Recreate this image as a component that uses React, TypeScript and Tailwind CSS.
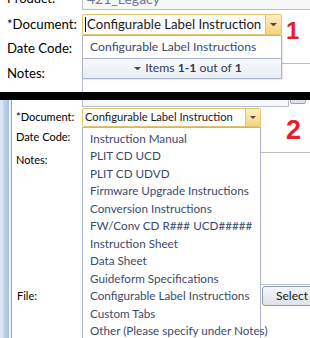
import React from "react";

const items = [
  "Instruction Manual",
  "PLIT CD UCD",
  "PLIT CD UDVD",
  "Firmware Upgrade Instructions",
  "Conversion Instructions",
  "FW/Conv CD R### UCD#####",
  "Instruction Sheet",
  "Data Sheet",
  "Guideform Specifications",
  "Configurable Label Instructions",
  "Custom Tabs",
  "Other (Please specify under Notes)",
];

function Arrow({ size = 8 }: { size?: number }) {
  return (
    <svg width={size} height={size / 2} viewBox="0 0 8 4">
      <path d="M0 0 L8 0 L4 4 Z" fill="#4a4a4a" />
    </svg>
  );
}

export default function App() {
  return (
    <div
      className="w-[310px] h-[338px] overflow-hidden bg-white relative"
      style={{ fontFamily: "Lato, 'Open Sans', sans-serif" }}
    >
      {/* Top section */}
      <div className="h-[92px] overflow-hidden relative">
        <div className="mt-[-13px] flex flex-col">
          <div className="flex h-[23px] items-center">
            <div className="w-[82px] shrink-0 pl-[7px] text-[13px] text-black">Product:</div>
            <div className="w-[230px] shrink-0 h-[23px] border border-[#b5bfcd] bg-[#f6f7f9] pl-[4px] text-[14px] text-[#6b7b93] leading-[21px]">
              421_Legacy
            </div>
          </div>
          <div className="flex h-[21px] items-center mt-[4px]">
            <div className="w-[82px] shrink-0 pl-[7px] text-[13.2px] text-black">*Document:</div>
            <div className="flex w-[200px] shrink-0 h-[21px] border border-[#e2c46f] bg-white rounded-[2px]">
              <div className="flex-1 pl-[2px] flex items-center text-[13.2px] text-[#1a1a1a] leading-none whitespace-nowrap overflow-hidden">
                <span className="w-px h-[15px] bg-black mr-[1px]" />
                Configurable Label Instruction
              </div>
              <div className="w-[16px] h-full bg-gradient-to-b from-[#fdefbf] to-[#f6d37e] border-l border-[#e2c46f] flex items-center justify-center">
                <Arrow size={7} />
              </div>
            </div>
          </div>
          <div className="flex h-[23px] items-center mt-[2px]">
            <div className="w-[82px] shrink-0 pl-[7px] text-[13.2px] text-black">Date Code:</div>
            <div className="w-[180px] shrink-0 h-[23px] border border-[#b5bfcd]" />
          </div>
          <div className="flex mt-[3px]">
            <div className="w-[82px] shrink-0 pl-[7px] pt-[1px] text-[13.2px] text-black">Notes:</div>
            <div className="flex-1 h-[60px] border border-[#b5bfcd] border-r-0" />
          </div>
        </div>

        {/* dropdown 1 */}
        <div className="absolute left-[82px] top-[35px] w-[200px] h-[44px] border border-[#a8b5ca] bg-white flex flex-col shadow-[1px_1px_1px_rgba(0,0,0,0.08)]">
          <div className="h-[22px] pl-[7px] flex items-center text-[12.2px] text-[#3a4b6e] whitespace-nowrap">
            Configurable Label Instructions
          </div>
          <div className="flex-1 border-t border-[#a8b5ca] bg-gradient-to-b from-[#f7f9fb] to-[#e9edf3] flex items-center justify-center gap-[4px] pl-[12px] text-[12.2px] text-[#2f3b52]">
            <Arrow size={7} />
            <span>
              Items <b>1-1</b> out of <b>1</b>
            </span>
          </div>
        </div>

        <div
          className="absolute left-[286px] top-[13px] text-[24px] font-bold text-[#e4202c]"
          style={{ fontFamily: "'Liberation Sans', Arial, sans-serif" }}
        >
          1
        </div>
      </div>

      {/* black bar */}
      <div className="h-[8px] bg-black" />

      {/* Bottom section */}
      <div className="relative flex h-[238px]">
        {/* window frame */}
        <div className="w-[3px] bg-[#dce7f5]" />
        <div className="w-[6px] bg-gradient-to-r from-[#c4d6ec] to-[#aac2e0]" />
        <div className="w-[2px] bg-[#eef3fa]" />
        <div className="w-px bg-[#9aa6b5]" />
        <div className="flex-1 overflow-hidden">
          <div className="flex flex-col mt-[-8px]">
            <div className="flex h-[15px]">
              <div className="w-[70px] shrink-0" />
              <div className="w-[207px] shrink-0 h-[15px] border border-[#b5bfcd] bg-[#f6f7f9]" />
              <div className="ml-[1px] w-[16px] shrink-0 h-[12px] border border-[#9aa3ae] bg-[#dfe3e8] rounded-[2px]" />
            </div>
            <div className="flex h-[19px] items-center mt-[1px]">
              <div className="w-[70px] shrink-0 pl-[4px] text-[11px] text-black">*Document:</div>
              <div className="flex w-[179px] shrink-0 h-[19px] border border-[#e2c46f] bg-white rounded-[2px]">
                <div className="flex-1 pl-[2px] flex items-center text-[11.2px] text-[#1a1a1a] whitespace-nowrap overflow-hidden">
                  Configurable Label Instruction
                </div>
                <div className="w-[15px] h-full bg-gradient-to-b from-[#fdefbf] to-[#f6d37e] border-l border-[#e2c46f] flex items-center justify-center">
                  <Arrow size={6} />
                </div>
              </div>
            </div>
            <div className="flex h-[19px] items-center mt-[1px]">
              <div className="w-[70px] shrink-0 pl-[4px] text-[11px] text-black">Date Code:</div>
              <div className="w-[150px] shrink-0 h-[19px] border border-[#b5bfcd]" />
            </div>
            <div className="flex mt-[5px]">
              <div className="w-[70px] shrink-0 pl-[4px] text-[11px] text-black">Notes:</div>
              <div className="flex-1 h-[133px] border border-[#b5bfcd] border-r-0" />
            </div>
            <div className="flex mt-[1px] items-center h-[20px]">
              <div className="w-[70px] shrink-0 pl-[5px] text-[11px] text-black">File:</div>
              <div className="ml-[180px] w-[70px] shrink-0 h-[20px] border border-[#8e9aab] rounded-[3px] bg-gradient-to-b from-[#f4f6f9] to-[#dde3ea] pl-[13px] text-[12px] text-[#1a1a1a] leading-[18px]">
                Select
              </div>
            </div>
          </div>
        </div>

        {/* dropdown 2 */}
        <div className="absolute left-[82px] top-[27px] w-[179px] h-[240px] border border-[#a8b5ca] bg-white flex flex-col pt-[2px]">
          {items.map((t) => (
            <div
              key={t}
              className="h-[17.5px] pl-[7px] flex items-center text-[11.7px] text-[#3a4b6e] whitespace-nowrap"
            >
              {t}
            </div>
          ))}
        </div>

        <div
          className="absolute left-[286px] top-[10px] text-[27px] font-bold text-[#e4202c]"
          style={{ fontFamily: "'Liberation Sans', Arial, sans-serif" }}
        >
          2
        </div>
      </div>
    </div>
  );
}
